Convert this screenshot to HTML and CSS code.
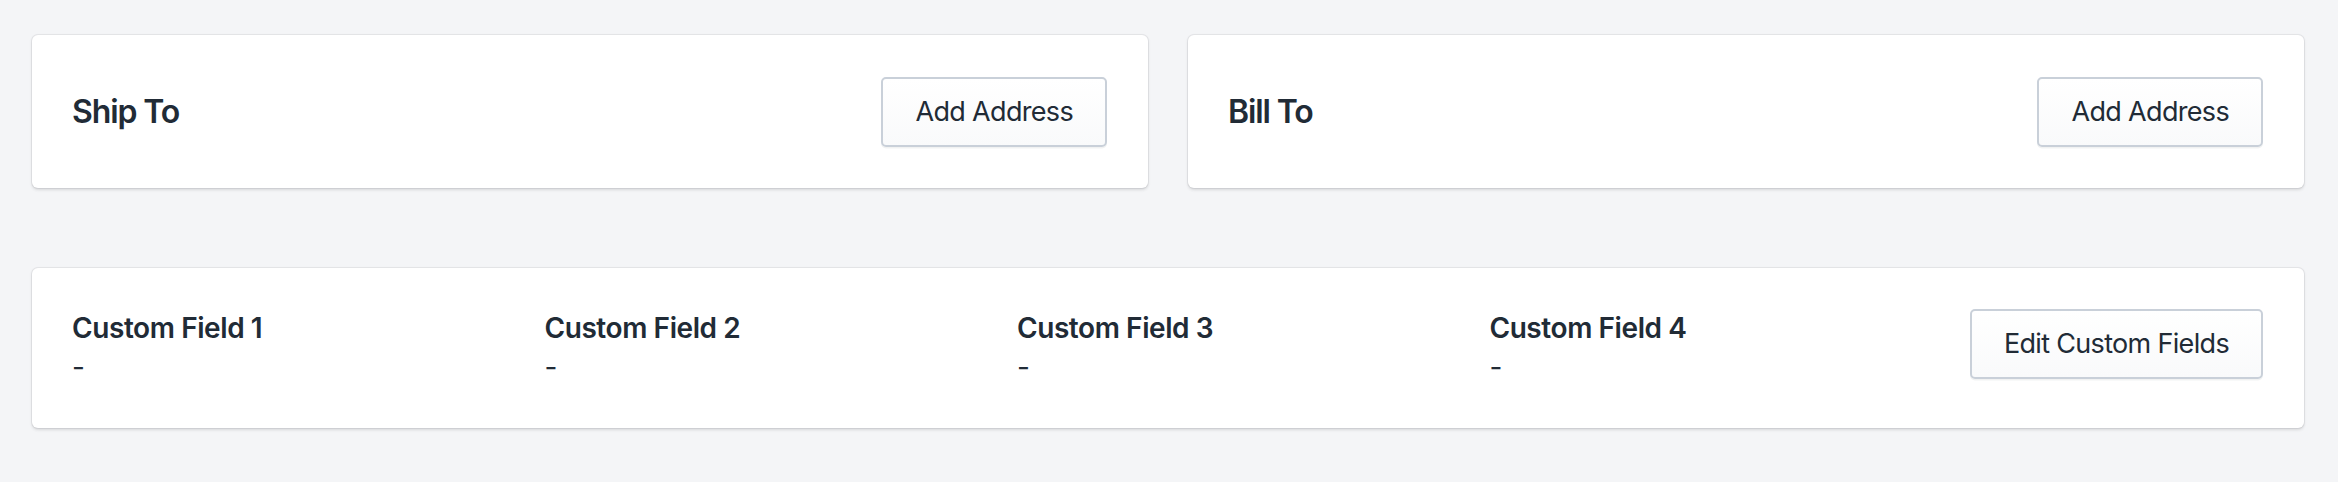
FILE: index.html
```html
<!DOCTYPE html>
<html lang="en">
<head>
<meta charset="utf-8">
<title>Order addresses</title>
<link rel="stylesheet" href="styles.css">
</head>
<body>
<main class="page">
  <section class="address-row">
    <div class="card address-card">
      <h2 class="card-title">Ship To</h2>
      <button class="btn" type="button">Add Address</button>
    </div>
    <div class="card address-card">
      <h2 class="card-title">Bill To</h2>
      <button class="btn" type="button">Add Address</button>
    </div>
  </section>
  <section class="card fields-card">
    <div class="fields">
      <div class="field">
        <div class="field-label">Custom Field 1</div>
        <div class="field-value">-</div>
      </div>
      <div class="field">
        <div class="field-label">Custom Field 2</div>
        <div class="field-value">-</div>
      </div>
      <div class="field">
        <div class="field-label">Custom Field 3</div>
        <div class="field-value">-</div>
      </div>
      <div class="field">
        <div class="field-label">Custom Field 4</div>
        <div class="field-value">-</div>
      </div>
    </div>
    <button class="btn" type="button">Edit Custom Fields</button>
  </section>
</main>
</body>
</html>
```

FILE: styles.css
```css
* { box-sizing: border-box; }

html, body {
  margin: 0;
  background: #f4f5f7;
}

body {
  font-family: Inter, "Noto Sans", "Liberation Sans", sans-serif;
  color: #212b36;
  font-size: 28px;
}

.page {
  padding: 35px 34px 40px 32px;
  display: flex;
  flex-direction: column;
  gap: 80px;
}

.address-row {
  display: grid;
  grid-template-columns: 1fr 1fr;
  gap: 40px;
}

.card {
  background: #ffffff;
  border-radius: 6px;
  box-shadow: 0 0 0 1px rgba(63, 63, 68, 0.07), 0 1.5px 3px 0 rgba(63, 63, 68, 0.16);
}

.address-card {
  display: flex;
  align-items: center;
  justify-content: space-between;
  padding: 41px 41px 41px 40px;
  min-height: 153px;
}

.card-title {
  margin: 0;
  font-size: 32px;
  font-weight: 600;
  line-height: 40px;
  letter-spacing: -0.035em;
}

.btn {
  font-family: inherit;
  font-size: 27px;
  letter-spacing: -0.025em;
  line-height: 40px;
  color: #212b36;
  padding: 13px 32px;
  border: 2px solid #c9d0d9;
  border-radius: 5px;
  background: linear-gradient(180deg, #ffffff, #f9fafb);
  box-shadow: 0 1.5px 0 0 rgba(22, 29, 37, 0.06);
  height: 70px;
  white-space: nowrap;
  cursor: pointer;
}

.fields-card {
  display: flex;
  align-items: flex-start;
  gap: 8px;
  padding: 41px 41px 41px 40px;
}

.fields {
  flex: 1;
  display: grid;
  grid-template-columns: repeat(4, 1fr);
}

.field-label {
  font-weight: 600;
  line-height: 39px;
  letter-spacing: -0.015em;
}

.field-value {
  line-height: 39px;
}
```
